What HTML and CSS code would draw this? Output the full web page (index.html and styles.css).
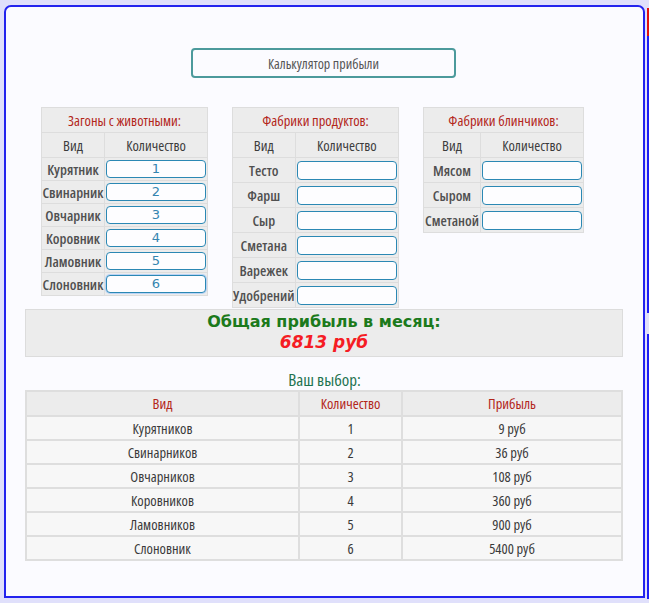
FILE: index.html
```html
<!DOCTYPE html>
<html lang="ru">
<head>
<meta charset="utf-8">
<title>Калькулятор прибыли</title>
<link rel="stylesheet" href="styles.css">
</head>
<body>
<div class="edge"><span class="edge-red"></span><span class="edge-gap"></span></div>
<div class="panel">
  <div class="title-row">
    <div class="title-btn">Калькулятор прибыли</div>
  </div>
  <div class="calc-row">
    <table class="calc t1">
      <tr><th colspan="2" class="cap">Загоны с животными:</th></tr>
      <tr><th class="c1">Вид</th><th>Количество</th></tr>
      <tr><td class="lbl">Курятник</td><td><div class="inp">1</div></td></tr>
      <tr><td class="lbl">Свинарник</td><td><div class="inp">2</div></td></tr>
      <tr><td class="lbl">Овчарник</td><td><div class="inp">3</div></td></tr>
      <tr><td class="lbl">Коровник</td><td><div class="inp">4</div></td></tr>
      <tr><td class="lbl">Ламовник</td><td><div class="inp">5</div></td></tr>
      <tr><td class="lbl">Слоновник</td><td><div class="inp focus">6</div></td></tr>
    </table>
    <table class="calc t2">
      <tr><th colspan="2" class="cap">Фабрики продуктов:</th></tr>
      <tr><th class="c1">Вид</th><th>Количество</th></tr>
      <tr><td class="lbl">Тесто</td><td><div class="inp"></div></td></tr>
      <tr><td class="lbl">Фарш</td><td><div class="inp"></div></td></tr>
      <tr><td class="lbl">Сыр</td><td><div class="inp"></div></td></tr>
      <tr><td class="lbl">Сметана</td><td><div class="inp"></div></td></tr>
      <tr><td class="lbl">Варежек</td><td><div class="inp"></div></td></tr>
      <tr><td class="lbl">Удобрений</td><td><div class="inp"></div></td></tr>
    </table>
    <table class="calc t3">
      <tr><th colspan="2" class="cap">Фабрики блинчиков:</th></tr>
      <tr><th class="c1">Вид</th><th>Количество</th></tr>
      <tr><td class="lbl">Мясом</td><td><div class="inp"></div></td></tr>
      <tr><td class="lbl">Сыром</td><td><div class="inp"></div></td></tr>
      <tr><td class="lbl">Сметаной</td><td><div class="inp"></div></td></tr>
    </table>
  </div>
  <div class="profit">
    <div class="profit-title">Общая прибыль в месяц:</div>
    <div class="profit-sum">6813 руб</div>
  </div>
  <div class="choice">Ваш выбор:</div>
  <table class="result">
    <tr><th class="r1">Вид</th><th class="r2">Количество</th><th>Прибыль</th></tr>
    <tr><td>Курятников</td><td>1</td><td>9 руб</td></tr>
    <tr><td>Свинарников</td><td>2</td><td>36 руб</td></tr>
    <tr><td>Овчарников</td><td>3</td><td>108 руб</td></tr>
    <tr><td>Коровников</td><td>4</td><td>360 руб</td></tr>
    <tr><td>Ламовников</td><td>5</td><td>900 руб</td></tr>
    <tr><td>Слоновник</td><td>6</td><td>5400 руб</td></tr>
  </table>
</div>
</body>
</html>
```
FILE: styles.css
```css
html, body {
  margin: 0;
  padding: 0;
}
body {
  background: #e0e0fb;
  width: 649px;
  height: 603px;
  overflow: hidden;
  position: relative;
  font-family: "Open Sans", "DejaVu Sans Condensed", sans-serif;
  font-stretch: 75%;
  color: #444;
}
.edge {
  position: absolute;
  left: 647px;
  top: 8px;
  width: 2px;
  height: 591px;
  background: #1e1ef5;
}
.edge-red {
  position: absolute;
  left: 0;
  top: 0;
  width: 2px;
  height: 28px;
  background: #e01010;
}
.edge-gap {
  position: absolute;
  left: 0;
  top: 305px;
  width: 2px;
  height: 21px;
  background: #e0e0fb;
}
.panel {
  margin: 5px 0 0 4px;
  width: 637px;
  height: 589px;
  border: 2px solid #2323ee;
  border-radius: 7px 7px 0 0;
  background: #fbfbff;
  box-sizing: content-box;
}
.title-row {
  display: flex;
  justify-content: center;
  padding-top: 41px;
  padding-right: 2px;
}
.title-btn {
  width: 261px;
  height: 26px;
  border: 2px solid #4c9a9c;
  border-radius: 4px;
  display: flex;
  align-items: center;
  justify-content: center;
  font-size: 14px;
  color: #555;
}
.calc-row {
  display: flex;
  align-items: flex-start;
  gap: 24px;
  padding-left: 35px;
  margin-top: 29px;
}
table {
  border-collapse: collapse;
}
.calc {
  background: #ececec;
  font-size: 14.5px;
}
.calc th, .calc td {
  border: 1px solid #dddddd;
  padding: 0;
  text-align: center;
  font-weight: normal;
}
.calc th {
  height: 24px;
  color: #3c3c3c;
}
.calc th.cap {
  color: #b3261a;
  font-weight: 500;
}
.calc td {
  height: 24px;
}
.calc td.lbl {
  font-weight: 600;
  color: #505050;
  white-space: nowrap;
}
.t1 td {
  height: 22px;
}
.t1 { width: 167px; }
.t1 .c1 { width: 62px; }
.t2 { width: 167px; }
.t2 .c1 { width: 61px; }
.t3 { width: 161px; }
.t3 .c1 { width: 56px; }
.inp {
  margin: 0 1px;
  height: 16px;
  border: 1.5px solid #2b88b4;
  border-radius: 4px;
  background: #fdfdff;
  color: #3585b0;
  font-family: "DejaVu Sans", sans-serif;
  font-stretch: normal;
  font-size: 13px;
  line-height: 16px;
  text-align: center;
}
.t2 .inp, .t3 .inp {
  height: 17px;
}
.inp.focus {
  box-shadow: 0 0 0 1px #b9d3f5;
}
.profit {
  margin: 1px 20px 0 19px;
  border: 1px solid #dcdcdc;
  background: #ececec;
  text-align: center;
  font-family: "DejaVu Sans", sans-serif;
  font-stretch: normal;
  font-weight: bold;
  font-size: 16px;
  line-height: 20px;
  padding-top: 2px;
  box-sizing: border-box;
  height: 48px;
}
.profit-title {
  color: #1c7a1c;
}
.profit-sum {
  color: #f51c24;
  font-style: italic;
  font-size: 17px;
}
.choice {
  margin-top: 12px;
  text-align: center;
  font-size: 17px;
  font-weight: 400;
  color: #1f7350;
  line-height: 21px;
}
.result {
  margin: 0 0 0 19px;
  width: 598px;
  font-size: 14.5px;
  background: #f7f7f7;
}
.result th, .result td {
  border: 2px solid #dedede;
  padding: 0;
  text-align: center;
  height: 22px;
}
.result th {
  background: #ececec;
  color: #b3261a;
  font-weight: 500;
  height: 23px;
}
.result td {
  color: #3a3a3a;
}
.result .r1 { width: 271px; }
.result .r2 { width: 101px; }
```
